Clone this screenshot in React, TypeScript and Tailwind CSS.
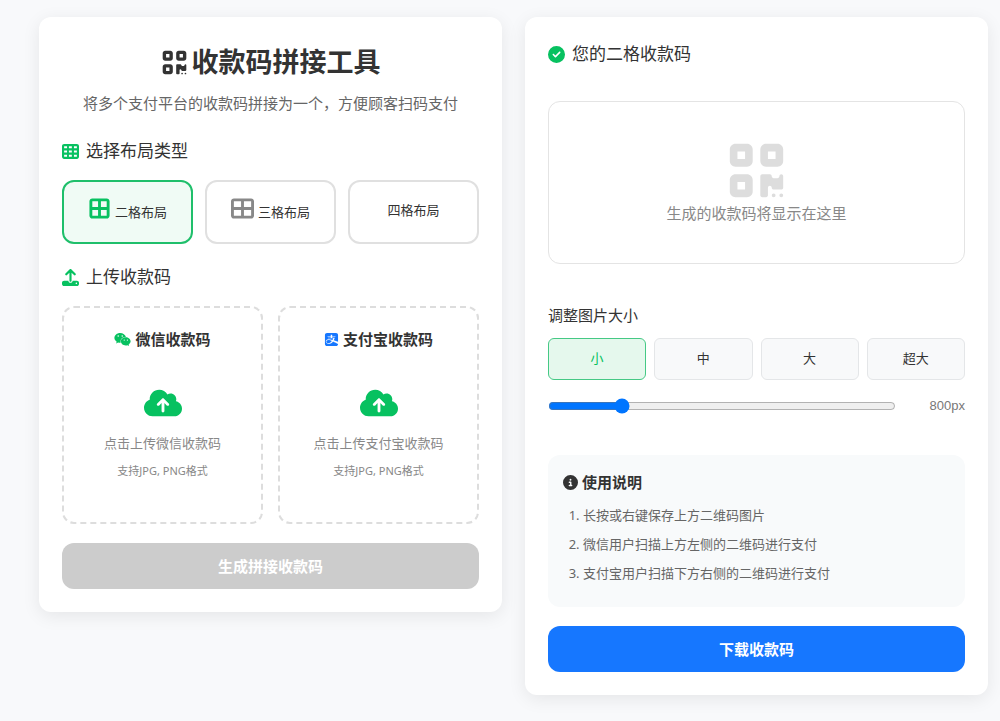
import { useState } from "react";
import {
  FaAlipay,
  FaBorderAll,
  FaCircleCheck,
  FaCircleInfo,
  FaCloudArrowUp,
  FaQrcode,
  FaTableCells,
  FaTableCellsLarge,
  FaUpload,
  FaWeixin,
} from "react-icons/fa6";

const layouts = [
  { id: "two", name: "二格布局", icon: FaBorderAll },
  { id: "three", name: "三格布局", icon: FaTableCellsLarge },
  { id: "four", name: "四格布局", icon: null },
];

const platforms = [
  { id: "wechat", name: "微信收款码", icon: FaWeixin, iconClass: "size-[17px] text-[#07c160]" },
  { id: "alipay", name: "支付宝收款码", icon: FaAlipay, iconClass: "size-[15px] text-[#1677ff]" },
];

const sizes = [
  { label: "小", value: 800 },
  { label: "中", value: 1200 },
  { label: "大", value: 1600 },
  { label: "超大", value: 2000 },
];

const steps = [
  "长按或右键保存上方二维码图片",
  "微信用户扫描上方左侧的二维码进行支付",
  "支付宝用户扫描下方右侧的二维码进行支付",
];

function BuilderPanel() {
  const [layout, setLayout] = useState("two");

  return (
    <section className="rounded-xl bg-white p-[23px] shadow-[0_4px_18px_rgba(0,0,0,0.08)]">
      <h1 className="flex items-center justify-center gap-1 text-[27px] leading-[44px] font-bold text-[#333]">
        <FaQrcode aria-hidden="true" />
        收款码拼接工具
      </h1>
      <p className="mt-[7px] text-center text-[15px] leading-6 text-[#666]">
        将多个支付平台的收款码拼接为一个，方便顾客扫码支付
      </p>

      {/* Layout type */}
      <h2 className="mt-[23px] flex items-center gap-[7px] text-[17px] leading-[26px] text-[#333]">
        <FaTableCells className="text-[#07c160]" aria-hidden="true" />
        选择布局类型
      </h2>
      <div className="mt-4 grid grid-cols-3 gap-3">
        {layouts.map((item) => {
          const isActive = layout === item.id;
          return (
            <button
              key={item.id}
              type="button"
              onClick={() => setLayout(item.id)}
              className={`flex h-16 items-center justify-center rounded-xl border-2 pb-1 text-[13px] leading-6 text-[#333] ${
                isActive ? "border-[#1fbf6b] bg-[#f0fbf5]" : "border-[#e0e0e0] bg-white"
              }`}
            >
              <span className="flex items-end gap-1">
                {item.icon && (
                  <item.icon
                    className={`mb-1 size-[23px] ${isActive ? "text-[#07c160]" : "text-[#888]"}`}
                    aria-hidden="true"
                  />
                )}
                {item.name}
              </span>
            </button>
          );
        })}
      </div>

      {/* Uploads */}
      <h2 className="mt-5 flex items-center gap-[7px] text-[17px] leading-[26px] text-[#333]">
        <FaUpload className="text-[#07c160]" aria-hidden="true" />
        上传收款码
      </h2>
      <div className="mt-4 grid grid-cols-2 gap-[15px]">
        {platforms.map((item) => (
          <div
            key={item.id}
            className="flex min-h-[218px] flex-col items-center rounded-xl border-2 border-dashed border-[#ddd] pt-[19px]"
          >
            <h3 className="flex items-center gap-1 text-[15px] leading-6 font-bold text-[#333]">
              <item.icon className={item.iconClass} aria-hidden="true" />
              {item.name}
            </h3>
            <label className="mt-[33px] flex cursor-pointer flex-col items-center">
              <input type="file" accept="image/png,image/jpeg" className="hidden" />
              <FaCloudArrowUp className="size-[38px] text-[#07c160]" aria-hidden="true" />
              <span className="mt-[11px] text-[13px] leading-5 text-[#888]">点击上传{item.name}</span>
              <span className="mt-2 text-[11px] leading-5 text-[#888]">支持JPG, PNG格式</span>
            </label>
          </div>
        ))}
      </div>

      <button
        type="button"
        disabled
        className="mt-[19px] h-[46px] w-full rounded-xl bg-[#ccc] text-[15px] font-bold text-white"
      >
        生成拼接收款码
      </button>
    </section>
  );
}

function ResultPanel() {
  const [size, setSize] = useState(800);

  return (
    <section className="rounded-xl bg-white p-[23px] shadow-[0_4px_18px_rgba(0,0,0,0.08)]">
      <h2 className="flex items-center gap-[7px] text-[17px] leading-7 text-[#333]">
        <FaCircleCheck className="text-[#07c160]" aria-hidden="true" />
        您的二格收款码
      </h2>

      <div className="mt-[33px] flex min-h-[163px] flex-col items-center justify-center rounded-xl border border-[#e4e4e4]">
        <FaQrcode className="size-[61px] text-[#ddd]" aria-hidden="true" />
        <p className="text-[15px] leading-6 text-[#888]">生成的收款码将显示在这里</p>
      </div>

      {/* Image size */}
      <label htmlFor="image-size" className="mt-[39px] block text-[15px] leading-6 text-[#333]">
        调整图片大小
      </label>
      <div className="mt-[11px] grid grid-cols-4 gap-2">
        {sizes.map((item) => (
          <button
            key={item.value}
            type="button"
            onClick={() => setSize(item.value)}
            className={`h-[42px] rounded-md border text-[13px] ${
              size === item.value
                ? "border-[#45c985] bg-[#e5f8ed] text-[#07c160]"
                : "border-[#e4e6e8] bg-[#f8f9fa] text-[#333]"
            }`}
          >
            {item.label}
          </button>
        ))}
      </div>
      <div className="mt-4 flex items-center gap-[15px]">
        <input
          id="image-size"
          type="range"
          min={400}
          max={2400}
          step={100}
          value={size}
          onChange={(e) => setSize(Number(e.target.value))}
          className="min-w-0 flex-1 accent-[#0075ff]"
        />
        <output
          htmlFor="image-size"
          className="w-[54px] text-right font-['Liberation_Sans',sans-serif] text-[13px] leading-5 text-[#777]"
        >
          {size}px
        </output>
      </div>

      {/* Instructions */}
      <div className="mt-[39px] rounded-xl bg-[#f8fafb] px-[15px] pt-[15px] pb-4">
        <h3 className="flex items-center gap-1 text-[15px] leading-6 font-bold text-[#333]">
          <FaCircleInfo aria-hidden="true" />
          使用说明
        </h3>
        <ol className="mt-2.5 list-decimal pl-5 text-[13px] leading-[23px] text-[#666]">
          {steps.map((step) => (
            <li key={step} className="mb-1.5">
              {step}
            </li>
          ))}
        </ol>
      </div>

      <button
        type="button"
        className="mt-[19px] h-[46px] w-full rounded-xl bg-[#1677ff] text-[15px] font-bold text-white"
      >
        下载收款码
      </button>
    </section>
  );
}

export default function App() {
  return (
    <main className="grid min-h-screen grid-cols-2 items-start gap-[23px] bg-[#f8f9fb] pt-[17px] pr-3 pb-6 pl-[39px] font-['Noto_Sans','Noto_Sans_CJK_SC',sans-serif]">
      <BuilderPanel />
      <ResultPanel />
    </main>
  );
}
